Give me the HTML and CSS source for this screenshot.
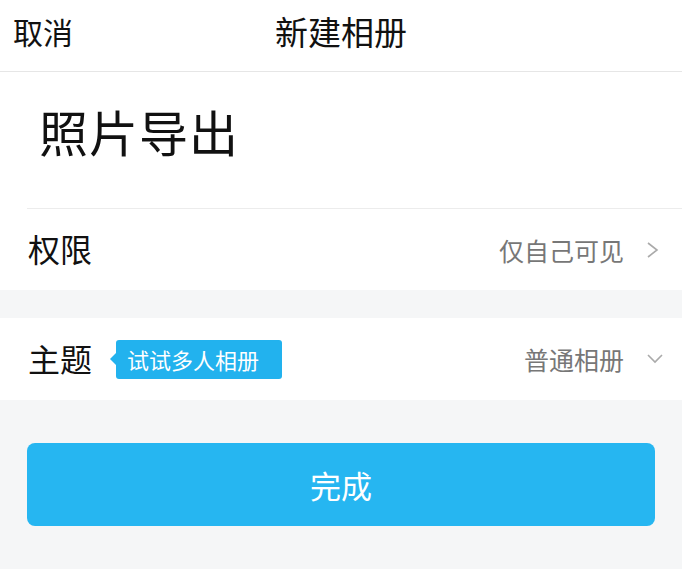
FILE: index.html
```html
<!DOCTYPE html>
<html lang="zh">
<head>
<meta charset="utf-8">
<link rel="stylesheet" href="styles.css">
</head>
<body>
<div class="page">
  <header class="nav">
    <span class="nav-left">取消</span>
    <span class="nav-title">新建相册</span>
    <span class="nav-right"></span>
  </header>
  <section class="name">
    <div class="name-text">照片导出</div>
  </section>
  <div class="row row-first">
    <span class="label">权限</span>
    <span class="value">仅自己可见
      <svg class="chev" width="14" height="18" viewBox="0 0 14 18"><path d="M2 2 L11 9 L2 16" fill="none" stroke="#aaa" stroke-width="1.6"/></svg>
    </span>
  </div>
  <div class="spacer"></div>
  <div class="row">
    <span class="label-group">
      <span class="label">主题</span>
      <span class="badge">试试多人相册</span>
    </span>
    <span class="value">普通相册
      <svg class="chev-down" width="18" height="12" viewBox="0 0 18 12"><path d="M2 2 L9 9 L16 2" fill="none" stroke="#aaa" stroke-width="1.6"/></svg>
    </span>
  </div>
  <div class="footer">
    <button class="done">完成</button>
  </div>
</div>
</body>
</html>
```
FILE: styles.css
```css
* { box-sizing: border-box; }
html, body { margin: 0; padding: 0; }
body {
  width: 682px;
  height: 569px;
  overflow: hidden;
  background: #f5f6f7;
  font-family: "Noto Sans CJK SC", "Noto Sans", sans-serif;
  color: #111;
}
.page { display: flex; flex-direction: column; height: 569px; }
.nav {
  height: 72px;
  background: #fff;
  border-bottom: 1px solid #e6e6e6;
  display: grid;
  grid-template-columns: 1fr auto 1fr;
  align-items: center;
  padding: 0 13px 10px 13px;
}
.nav-left { font-size: 30px; }
.nav-title { font-size: 33px; }
.name {
  background: #fff;
  height: 136px;
  padding-left: 39px;
  display: flex;
  align-items: center;
}
.name-text { font-size: 49px; letter-spacing: 1px; padding-bottom: 20px; }
.row {
  background: #fff;
  height: 82px;
  padding: 0 20px 0 28px;
  display: flex;
  align-items: center;
  justify-content: space-between;
}
.row-first {
  position: relative;
  border-top: 1px solid #ececec;
}
.row-first::before {
  content: "";
  position: absolute;
  left: 0; top: -1px;
  width: 27px; height: 1px;
  background: #fff;
}
.label { font-size: 32px; padding-bottom: 3px; }
.label-group { display: flex; align-items: center; gap: 24px; }
.badge {
  position: relative;
  background: #22b2ee;
  color: #fff;
  font-size: 22px;
  height: 39px;
  line-height: 39px;
  padding: 0 23px 0 11px;
  border-radius: 3px;
}
.badge::before {
  content: "";
  position: absolute;
  left: -6px; top: 50%;
  margin-top: -6px;
  border-style: solid;
  border-width: 6px 6px 6px 0;
  border-color: transparent #22b2ee transparent transparent;
}
.value {
  font-size: 25px;
  color: #777;
  display: flex;
  align-items: center;
  gap: 22px;
}
.chev { margin-right: 2px; }
.chev-down { margin-left: 0; margin-right: -2px; }
.spacer { height: 28px; }
.footer { padding: 43px 27px 0 27px; }
.done {
  width: 100%;
  height: 83px;
  border: none;
  border-radius: 8px;
  background: #26b6f1;
  color: #fff;
  font-family: "Noto Sans CJK SC", sans-serif;
  font-size: 31px;
  padding: 0;
}
```
